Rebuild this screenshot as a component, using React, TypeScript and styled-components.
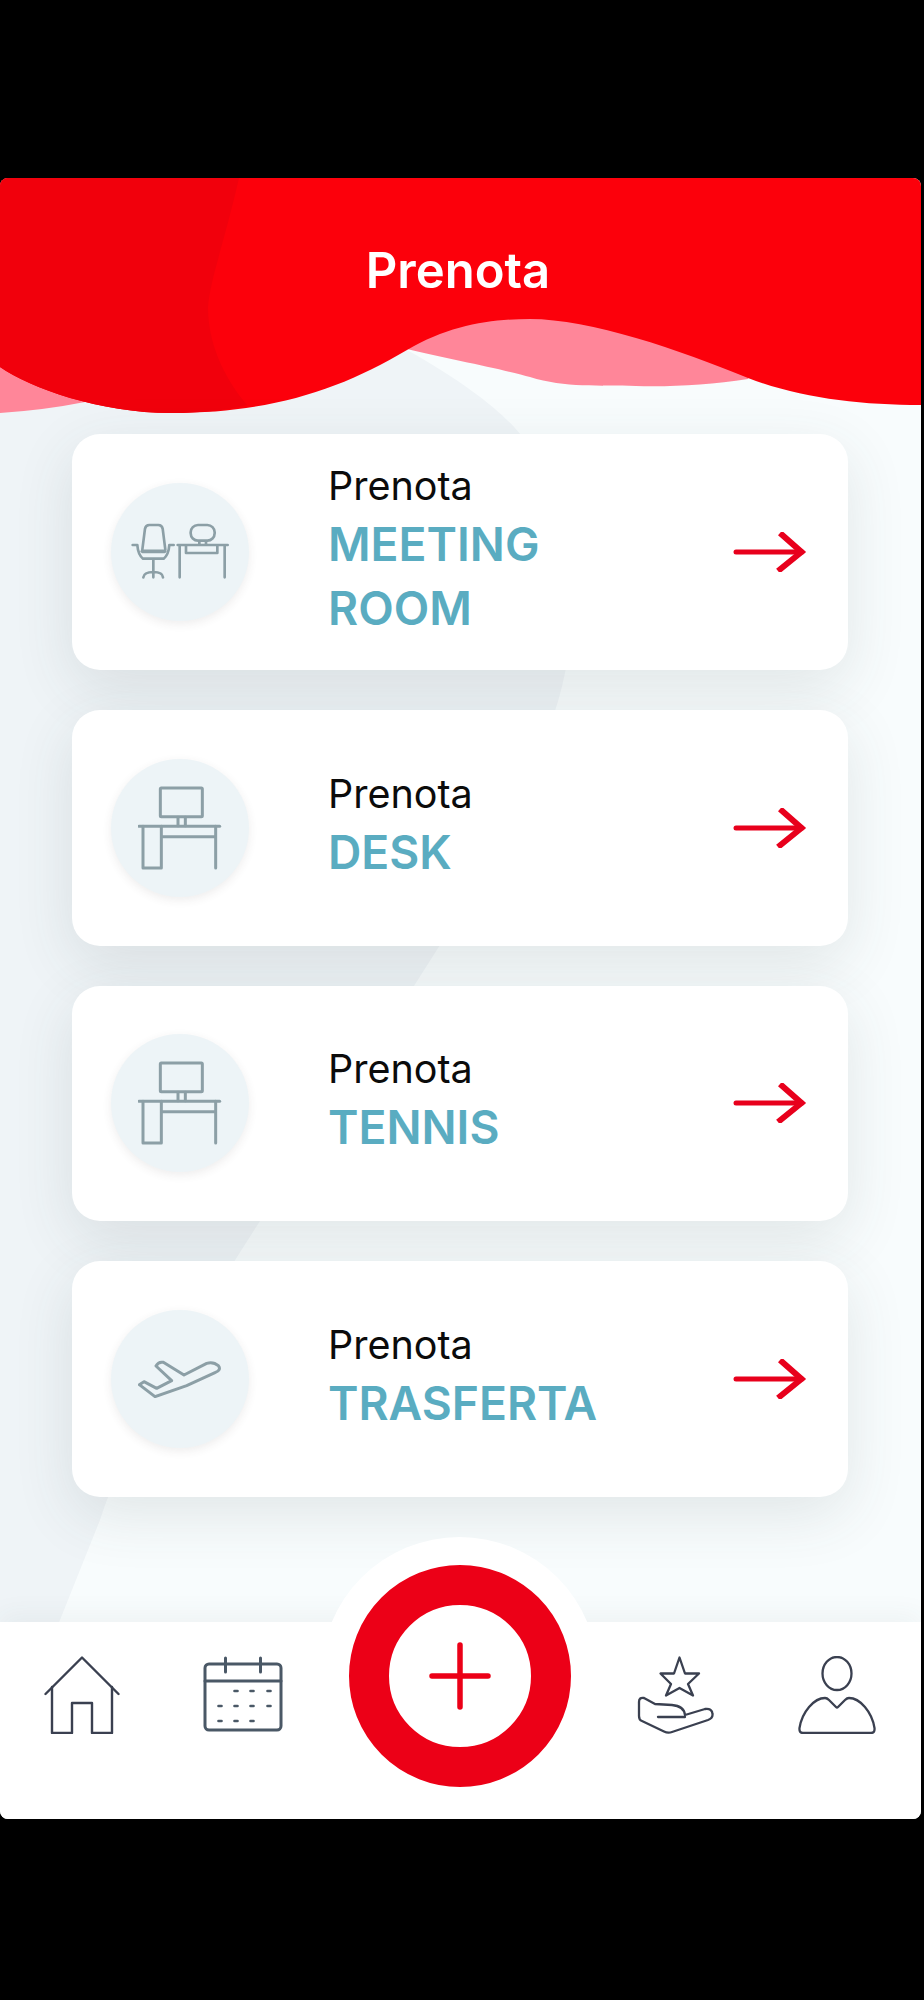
import React from "react";
import styled, { createGlobalStyle } from "styled-components";

const Global = createGlobalStyle`
  html, body { margin: 0; padding: 0; background: #000; }
  body { height: 2000px; font-family: "Inter", "Liberation Sans", sans-serif; }
`;

const Screen = styled.div`
  position: relative;
  margin-top: 178px;
  width: 921px;
  height: 1641px;
  border-radius: 8px;
  overflow: hidden;
  background: #f8fcfd;
  display: flex;
  flex-direction: column;
`;

const Backdrop = styled.svg`
  position: absolute;
  left: 0;
  top: 0;
  width: 921px;
  height: 1641px;
`;

const Header = styled.header`
  position: relative;
  height: 235px;
  flex: none;
  display: flex;
  justify-content: center;
  align-items: flex-start;
`;

const Waves = styled.svg`
  position: absolute;
  left: 0;
  top: 0;
  width: 921px;
  height: 240px;
`;

const Title = styled.h1`
  position: relative;
  margin: 66px 5px 0 0;
  font-size: 49px;
  line-height: 54px;
  font-weight: 600;
  color: #fff;
`;

const List = styled.main`
  position: relative;
  flex: 1;
  display: flex;
  flex-direction: column;
  gap: 40px;
  padding: 21.4px 0 0 72px;
`;

const Card = styled.article`
  width: 776px;
  height: 235.6px;
  box-sizing: border-box;
  border-radius: 28px;
  background: #fff;
  box-shadow: 0 18px 60px rgba(60, 70, 70, 0.12);
  display: flex;
  align-items: center;
  padding: 0 40px 0 39px;
`;

const IconCircle = styled.div`
  width: 138px;
  height: 138px;
  flex: none;
  border-radius: 50%;
  background: #edf4f7;
  box-shadow: 0 3px 10px rgba(70, 60, 60, 0.09);
  display: flex;
  align-items: center;
  justify-content: center;
`;

const Copy = styled.div`
  width: 300px;
  margin: -1px 0 0 79px;
  display: flex;
  flex-direction: column;
`;

const Small = styled.div`
  font-size: 39.5px;
  line-height: 46px;
  margin-bottom: 4px;
  font-weight: 400;
  color: #0b0b0b;
`;

const Big = styled.div`
  font-size: 46.2px;
  line-height: 63.5px;
  font-weight: 600;
  color: #5aacc1;
`;

const ArrowWrap = styled.svg`
  margin-left: auto;
  margin-right: 1px;
  flex: none;
`;

const Nav = styled.nav`
  position: relative;
  flex: none;
  height: 197px;
  box-sizing: border-box;
  background: #fff;
  box-shadow: 0 -8px 24px rgba(60, 70, 70, 0.05);
  display: grid;
  grid-template-columns: 161px 161px 1fr 161px 161px;
  padding: 34px 3.5px 0 1.5px;
  align-items: start;
`;

const NavItem = styled.div`
  display: flex;
  justify-content: center;
`;

const Halo = styled.div`
  position: absolute;
  left: 321px;
  top: -85px;
  width: 277px;
  height: 277px;
  border-radius: 50%;
  background: #fff;
  display: flex;
  align-items: center;
  justify-content: center;
`;

const Ring = styled.div`
  width: 142px;
  height: 142px;
  border: 40px solid #ec0017;
  border-radius: 50%;
  background: #fff;
  display: flex;
  align-items: center;
  justify-content: center;
`;

const ChairDesk = () => (
  <svg width="104" height="60" viewBox="207 312 312 180" fill="none" stroke="#8c9fa6" strokeWidth="8" strokeLinecap="round" strokeLinejoin="round">
    <path d="M250 395 L258 332 Q260 321 271 321 H298 Q309 321 311 332 L319 395" />
    <path d="M250 400 H317" strokeWidth="11" />
    <path d="M221 381 H235 Q237 410 252 422 H314 Q329 410 331 381 H344" />
    <path d="M283 425 V478 M253 478 Q255 462 283 462 Q311 462 312 478" />
    <path d="M356 381 H506 M362 381 V478 M497 381 V478 M381 385 V405 H475 V385" />
    <rect x="395" y="321" width="72" height="47" rx="22" />
    <path d="M421 370 V379 M441 370 V379" />
  </svg>
);

const Desk = () => (
  <svg width="84" height="84" viewBox="145 136 252 252" fill="none" stroke="#8c9fa6" strokeWidth="9" strokeLinecap="round" strokeLinejoin="round">
    <rect x="212" y="142" width="126" height="86" rx="3" />
    <path d="M265 230 V255 M287 230 V255" />
    <path d="M148 257 H390" />
    <path d="M160 257 V382 H215 V257 M215 288 H378 M378 257 V382" />
  </svg>
);

const Plane = () => (
  <svg width="84" height="38" viewBox="144 208 252 114" fill="none" stroke="#8c9fa6" strokeWidth="9" strokeLinecap="round" strokeLinejoin="round">
    <path d="M148 282 L162 273 L200 293 L245 270 L198 226 Q205 212 220 215 L282 253 L350 218 Q370 212 385 225 Q395 238 375 246 L290 285 L195 318 Z" />
  </svg>
);

const Arrow = () => (
  <ArrowWrap width="74" height="40" viewBox="0 0 74 40" fill="none" stroke="#e8001c" strokeWidth="5">
    <path d="M3 20 H69" strokeLinecap="round" />
    <path d="M47 1 L68.500 20 L45 39" strokeWidth="6" />
  </ArrowWrap>
);

const Home = () => (
  <svg width="76" height="78" viewBox="44 136 76 78" fill="none" stroke="#3a4050" strokeWidth="2.4" strokeLinecap="round" strokeLinejoin="round">
    <path d="M45.5 174 L82 137.5 L118.5 174" />
    <path d="M52 167 V213 H72 V183 H92 V213 H112 V167" />
  </svg>
);

const Calendar = () => {
  const rows: [number, number[]][] = [
    [172, [236, 252, 269]],
    [187, [220, 236, 252, 269]],
    [202, [220, 236, 252]],
  ];
  return (
    <svg width="80" height="78" viewBox="203 137 80 78" fill="none" stroke="#4a5866" strokeWidth="3" strokeLinecap="round" strokeLinejoin="round">
      <rect x="205" y="145" width="76" height="66" rx="4" />
      <path d="M205 162 H281 M225.500 139 V153 M260.500 139 V153" />
      {rows.map(([y, xs]) =>
        xs.map((x) => <path key={`${x}-${y}`} d={`M${x - 1.5} ${y} H${x + 1.5}`} strokeWidth="2.600" />)
      )}
    </svg>
  );
};

const Plus = () => (
  <svg width="62" height="68" viewBox="0 0 62 68" stroke="#ec0017" strokeWidth="5.500" strokeLinecap="round">
    <path d="M31 3 V65 M3 34 H59" />
  </svg>
);

const StarHand = () => (
  <svg width="78" height="78" viewBox="637 1656 78 78" fill="none" stroke="#3a4050" strokeWidth="2.300" strokeLinecap="round" strokeLinejoin="round">
    <path d="M679.5 1657.500 L685 1673.500 L699 1673.500 L688 1684 L693 1695.500 L679.500 1688 L666 1695.500 L671 1684 L660.500 1673.500 L674 1673.500 Z" />
    <path d="M639 1702 Q639 1697 644 1698 L655 1704 L672 1705 Q684 1706 685 1715 L705 1709 Q712 1708 712.500 1714 Q713 1718 708 1720 L672 1732 Q668 1733.500 664 1731.500 L642 1721 Q639 1720 639 1716 Z" />
    <path d="M658 1717 H685" />
  </svg>
);

const Person = () => (
  <svg width="78" height="78" viewBox="798 1656 78 78" fill="none" stroke="#3a4050" strokeWidth="2.300" strokeLinecap="round" strokeLinejoin="round">
    <ellipse cx="837" cy="1673.500" rx="14.500" ry="16.500" />
    <path d="M803 1733 H871 Q875 1733 874.500 1728 C872 1712 860 1698 849 1698 Q847 1698 845 1700 L838 1707 Q837 1708 836 1707 L829 1700 Q827 1698 825 1698 C814 1698 802 1712 799.500 1728 Q799 1733 803 1733 Z" />
  </svg>
);

const items = [
  { icon: <ChairDesk />, label: "MEETING ROOM" },
  { icon: <Desk />, label: "DESK" },
  { icon: <Desk />, label: "TENNIS" },
  { icon: <Plane />, label: "TRASFERTA" },
];

export default function App() {
  return (
    <>
      <Global />
      <Screen>
        <Backdrop viewBox="0 178 921 1641">
          <path
            d="M0 400 L407 350 C470 385 505 415 521 435 C575 510 585 620 555 711 C530 790 470 900 440 945 C380 1040 320 1130 260 1221 C190 1330 130 1430 100 1520 L58 1625 L0 1625 Z"
            fill="#eff4f7"
          />
        </Backdrop>
        <Header>
          <Waves viewBox="0 178 921 240">
            <path d="M0 350 L110 395 L85 402 Q45 410 0 413 Z" fill="#ff8699" />
            <path d="M400 330 L530 290 L760 350 L748 379 C710 385 670 387 636 386 C600 385 565 388 530 377 C510 371 450 359 407 349 Z" fill="#ff8699" />
            <path d="M0 178 H921 V405 C860 405 800 398 748 378 C680 350 590 319 530 319 C490 319 450 325 407 350 C340 390 270 413 171 413 C100 413 30 388 0 367 Z" fill="#fc000b" />
            <path d="M0 178 H239 C225 240 210 280 208 307 C208 350 230 385 247 405 C225 411 195 413 171 413 C100 413 30 388 0 367 Z" fill="#f1000c" />
          </Waves>
          <Title>Prenota</Title>
        </Header>
        <List>
          {items.map((it) => (
            <Card key={it.label}>
              <IconCircle>{it.icon}</IconCircle>
              <Copy>
                <Small>Prenota</Small>
                <Big>{it.label}</Big>
              </Copy>
              <Arrow />
            </Card>
          ))}
        </List>
        <Nav>
          <NavItem><Home /></NavItem>
          <NavItem><Calendar /></NavItem>
          <div />
          <NavItem><StarHand /></NavItem>
          <NavItem><Person /></NavItem>
          <Halo>
            <Ring><Plus /></Ring>
          </Halo>
        </Nav>
      </Screen>
    </>
  );
}
